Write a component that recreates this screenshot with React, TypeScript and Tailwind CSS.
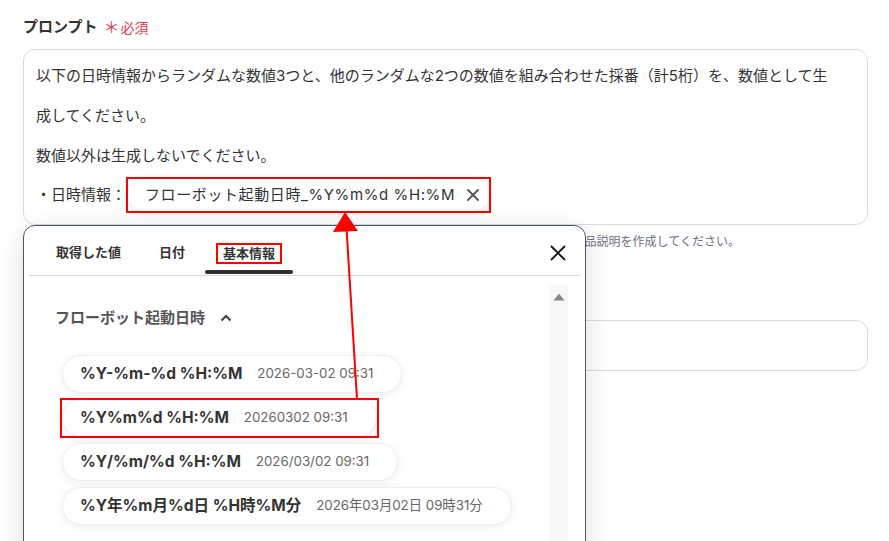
import React from "react";

const FONT = { fontFamily: "Inter, 'Noto Sans CJK JP', sans-serif" } as const;

function Pill({ fmt, val, boxed }: { fmt: string; val: string; boxed?: boolean }) {
  return (
    <div className="relative self-start">
      <div className="flex items-center h-[38px] rounded-full bg-white border border-[#eceef2] shadow-[0_2px_10px_rgba(0,0,0,0.07)] pl-[17px] pr-[28px] gap-[15px]">
        <span className="text-[15.5px] font-bold text-[#333]">{fmt}</span>
        <span className="text-[13.3px] text-[#666]">{val}</span>
      </div>
      {boxed && (
        <span className="absolute left-[-2px] right-[-2px] top-[-1px] bottom-[-1px] border-2 border-[#ff0000] pointer-events-none" />
      )}
    </div>
  );
}

export default function App() {
  return (
    <div className="relative w-[889px] h-[541px] bg-white overflow-hidden text-[#333]" style={FONT}>
      <div className="px-[23px] pt-[17px] w-[868px] box-content">
        <div className="flex items-center gap-[6px] h-[20px]">
          <span className="text-[15px] font-bold text-[#333]">プロンプト</span>
          <span className="text-[14px] text-[#e8374f] flex items-center">
            <span className="text-[16px] mr-[1px]">＊</span>必須
          </span>
        </div>
        <div className="mt-[12px] w-[845px] border border-[#d8dce2] rounded-[12px] pl-[12px] pr-[12px] pt-[6px] pb-[10px] text-[15px] leading-[40px] text-[#333]">
          <div>以下の日時情報からランダムな数値3つと、他のランダムな2つの数値を組み合わせた採番（計5桁）を、数値として生</div>
          <div>成してください。</div>
          <div>数値以外は生成しないでください。</div>
          <div className="flex items-center h-[38px]">
            <span>・日時情報：</span>
            <span className="inline-flex border-2 border-[#ff0000]">
              <span className="flex items-center h-[32px] rounded-full bg-white shadow-[0_2px_10px_rgba(0,0,0,0.1)] pl-[17px] pr-[10px] text-[15px] tracking-[0.6px]">
                フローボット起動日時_%Y%m%d %H:%M
                <svg className="ml-[12px]" width="12" height="12" viewBox="0 0 12 12">
                  <path d="M1 1 L11 11 M11 1 L1 11" stroke="#555" strokeWidth="1.8" strokeLinecap="round" />
                </svg>
              </span>
            </span>
          </div>
        </div>
        <div className="mt-[9px] text-[12px] leading-[16px] text-[#6b7280] whitespace-nowrap">
          指示内容をもとに生成ＡＩが回答を作成します。具体的な指示を入力してください。例：特徴をもとに商品説明を作成してください。
        </div>
        <div className="mt-[38px] text-[15px] font-bold leading-[20px]">商品説明</div>
        <div className="mt-[12px] h-[51px] w-[845px] border border-[#d8dce2] rounded-[12px]" />
      </div>

      {/* popover */}
      <div className="absolute left-[23px] top-[225px] w-[563px] h-[340px] bg-white border border-[#4b5563] rounded-t-[12px] shadow-[0_6px_28px_rgba(0,0,0,0.13)] flex flex-col">
        <div className="relative h-[49px] flex pl-[14px] gap-[2px] text-[13px] font-bold text-[#333]">
          <div className="h-full flex items-center pt-[5px] px-[18px]">取得した値</div>
          <div className="h-full flex items-center pt-[5px] px-[18px]">日付</div>
          <div className="relative h-full flex items-center pt-[5px] px-[11px]">
            <span className="border-2 border-[#ff0000] px-[5px] leading-[17px]">基本情報</span>
            <span className="absolute left-0 right-0 bottom-[1px] h-[4px] rounded-full bg-[#2f2f2f]" />
          </div>
          <svg className="absolute right-[19px] top-[19px]" width="16" height="16" viewBox="0 0 16 16">
            <path d="M1 1 L15 15 M15 1 L1 15" stroke="#111" strokeWidth="1.8" />
          </svg>
        </div>
        <div className="mx-[5px] h-px bg-[#d6d9de]" />
        <div className="flex flex-1">
          <div className="flex-1 pl-[31px]">
            <div className="mt-[31px] flex items-center h-[22px] text-[15px] font-bold text-[#555]">
              フローボット起動日時
              <svg className="ml-[15px]" width="12" height="8" viewBox="0 0 12 8">
                <path d="M1.5 6.5 L6 2 L10.5 6.5" stroke="#444" strokeWidth="2.2" fill="none" />
              </svg>
            </div>
            <div className="mt-[26px] pl-[7px] flex flex-col gap-[6px]">
              <Pill fmt="%Y-%m-%d %H:%M" val="2026-03-02 09:31" />
              <Pill fmt="%Y%m%d %H:%M" val="20260302 09:31" boxed />
              <Pill fmt="%Y/%m/%d %H:%M" val="2026/03/02 09:31" />
              <Pill fmt="%Y年%m月%d日 %H時%M分" val="2026年03月02日 09時31分" />
            </div>
          </div>
          <div className="w-[19px] mr-[17px] mt-[9px] bg-[#f8f8f8] flex justify-center pt-[8px]">
            <svg width="12" height="8" viewBox="0 0 12 8">
              <path d="M6 0.5 L11.5 7.5 L0.5 7.5 Z" fill="#888" />
            </svg>
          </div>
        </div>
      </div>

      {/* arrow annotation */}
      <svg className="absolute left-0 top-0 pointer-events-none" width="889" height="541" viewBox="0 0 889 541">
        <line x1="357" y1="399" x2="346.5" y2="228" stroke="#ff0000" strokeWidth="2" />
        <polygon points="345,212 333,232 358,231" fill="#ff0000" />
      </svg>
    </div>
  );
}
